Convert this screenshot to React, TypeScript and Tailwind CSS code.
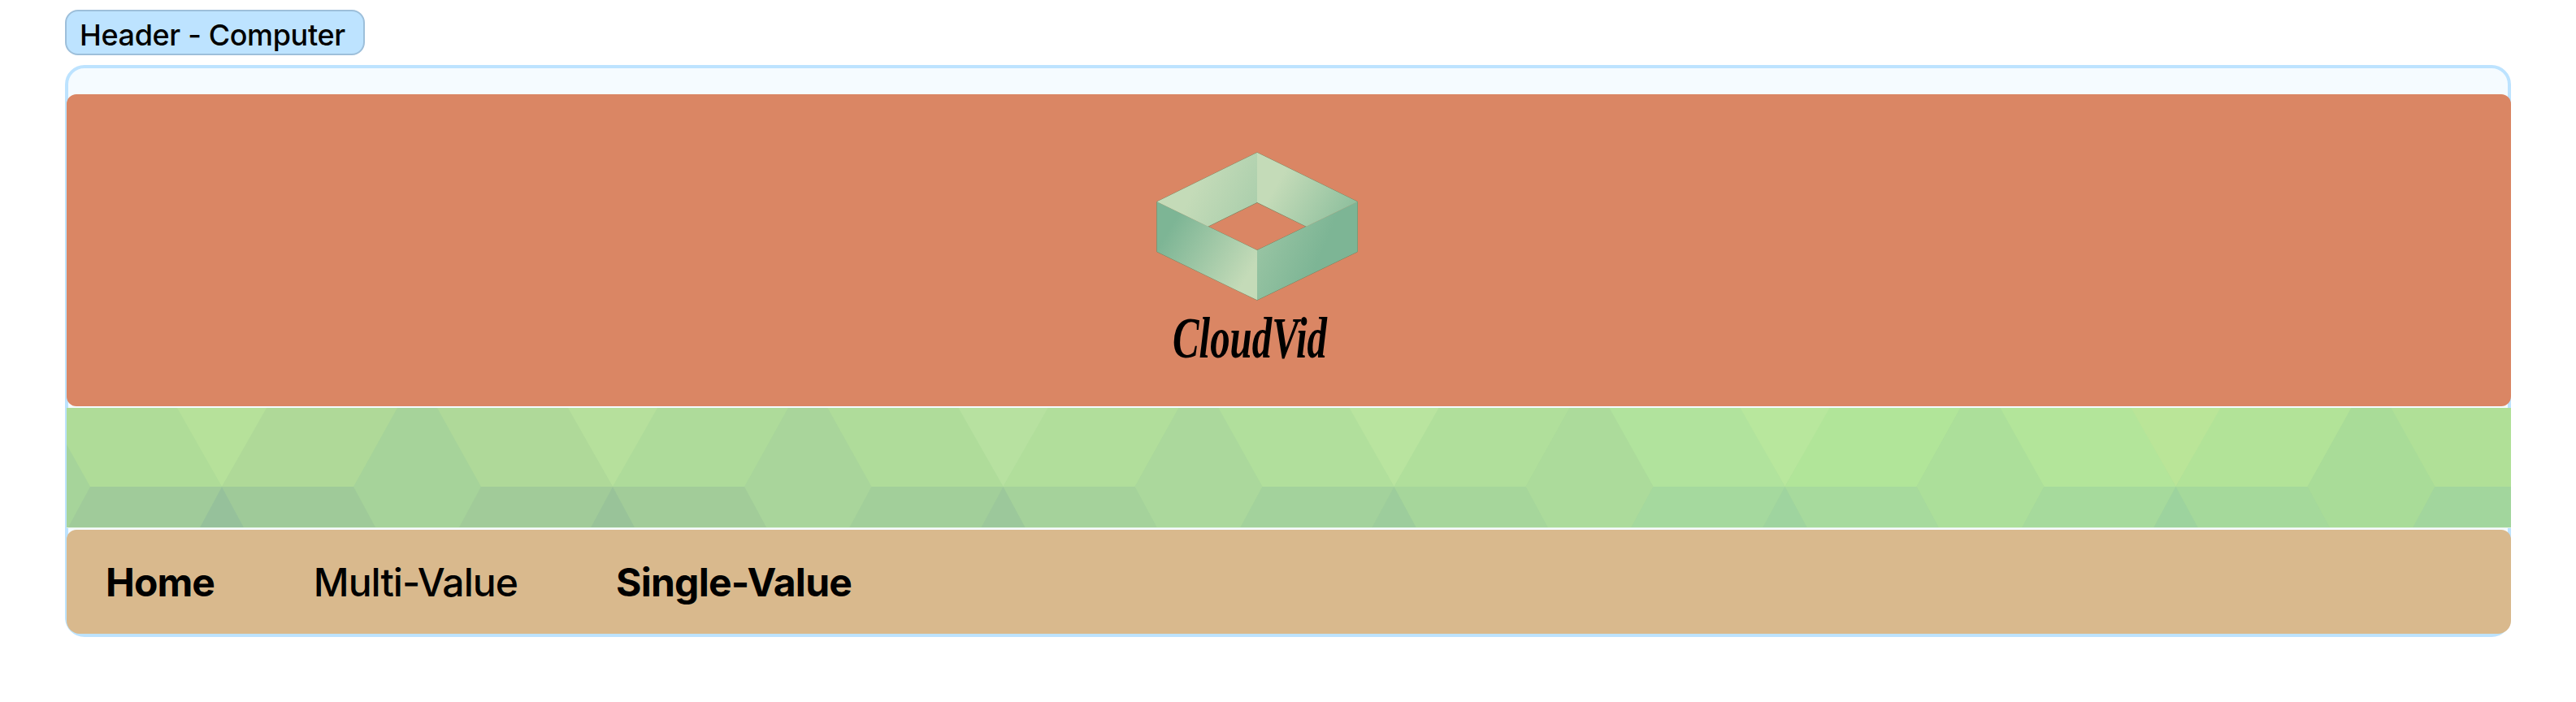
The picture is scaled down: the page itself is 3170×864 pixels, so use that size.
type Tile = {
  apex: number;
  peak: string;
  left: string;
  right: string;
  gem: string;
  lowLeft: string;
  lowRight: string;
  wedge: string;
};

const tiles: Tile[] = [
  { apex: 191, peak: '#b6e19a', left: '#afdc98', right: '#afd998', gem: '#a6d39a', lowLeft: '#a0cb9a', lowRight: '#9fca99', wedge: '#96c19b' },
  { apex: 672, peak: '#b6e09c', left: '#afd999', right: '#aedb9a', gem: '#a9d59b', lowLeft: '#a1cb99', lowRight: '#a2cc99', wedge: '#99c399' },
  { apex: 1152.5, peak: '#b7e1a0', left: '#afdc9a', right: '#b1de9b', gem: '#abd89c', lowLeft: '#a2cf9a', lowRight: '#a5d29b', wedge: '#9cc89b' },
  { apex: 1633.5, peak: '#b9e49f', left: '#b1df9c', right: '#b0df9b', gem: '#acdb9b', lowLeft: '#a3d29c', lowRight: '#a6d69b', wedge: '#9dcd9c' },
  { apex: 2114.5, peak: '#b8e79d', left: '#b1e39d', right: '#b1e599', gem: '#acdf9a', lowLeft: '#a5d99e', lowRight: '#a7da9d', wedge: '#9fd49f' },
  { apex: 2595.5, peak: '#bae598', left: '#b3e59a', right: '#b2e398', gem: '#a9dc98', lowLeft: '#a6da9c', lowRight: '#a5d99b', wedge: '#9dd39e' },
  { apex: 3076.5, peak: '#b9e298', left: '#b0e097', right: '#b0e097', gem: '#a9dc98', lowLeft: '#a2d69d', lowRight: '#a2d69d', wedge: '#9dd39e' },
];

function Pattern() {
  return (
    <svg className="block h-[148px] w-full" viewBox="0 0 3008 148" preserveAspectRatio="none" aria-hidden="true">
      <rect width="3008" height="147" fill="#a6d49a" />
      {tiles.map((t) => (
        <g key={t.apex} transform={`translate(${t.apex} 0)`}>
          <polygon points="162,97 216,0 266,0 319,97 292,147 189,147" fill={t.gem} />
          <polygon points="-216,0 -54,0 0,97 -162,97" fill={t.left} />
          <polygon points="54,0 216,0 162,97 0,97" fill={t.right} />
          <polygon points="-55,0 55,0 0,97" fill={t.peak} />
          <polygon points="-162,97 0,97 -27,147 -189,147" fill={t.lowLeft} />
          <polygon points="0,97 162,97 189,147 27,147" fill={t.lowRight} />
          <polygon points="0,97 27,147 -27,147" fill={t.wedge} />
        </g>
      ))}
      <rect y="147" width="3008" height="1" fill="#dff0dc" />
    </svg>
  );
}

function Logo() {
  return (
    <svg width="330" height="290" viewBox="1422 185 330 290" className="block" role="img" aria-label="CloudVid">
      <defs>
        <linearGradient id="backLeft" gradientUnits="userSpaceOnUse" x1="1470" y1="230" x2="1560" y2="275">
          <stop offset="0" stopColor="#c4dbb8" />
          <stop offset="1" stopColor="#a4cba9" />
        </linearGradient>
        <linearGradient id="backRight" gradientUnits="userSpaceOnUse" x1="1574" y1="222" x2="1656" y2="270">
          <stop offset="0" stopColor="#c4dbb8" />
          <stop offset="1" stopColor="#8fc09e" />
        </linearGradient>
        <linearGradient id="frontLeft" gradientUnits="userSpaceOnUse" x1="1438" y1="284" x2="1534" y2="342">
          <stop offset="0" stopColor="#7db595" />
          <stop offset="1" stopColor="#c4dbb8" />
        </linearGradient>
        <linearGradient id="frontRight" gradientUnits="userSpaceOnUse" x1="1520" y1="280" x2="1622" y2="322">
          <stop offset="0" stopColor="#a4cba9" />
          <stop offset="1" stopColor="#7db595" />
        </linearGradient>
      </defs>
      <g stroke="#74835f" strokeWidth="1" fill="none">
        <path d="M1547 187.8 1670.5 248.3V309.8L1547 369.3 1423.7 309.8V248.3Z" />
        <path d="M1547 249.2 1607.5 278.8 1547 308 1486.5 278.8Z" />
      </g>
      <polygon points="1423.7,248.3 1547,187.8 1547,249 1486.5,278.8" fill="url(#backLeft)" />
      <polygon points="1547,187.8 1670.5,248.3 1607.5,278.8 1547,249" fill="url(#backRight)" />
      <polygon points="1423.7,248.3 1547,308 1547,369.3 1423.7,309.8" fill="url(#frontLeft)" />
      <polygon points="1547,308 1670.5,248.3 1670.5,309.8 1547,369.3" fill="url(#frontRight)" />
      <text
        x="1443"
        y="440"
        textLength="190"
        lengthAdjust="spacingAndGlyphs"
        className="font-['Liberation_Serif',serif] text-[71px] font-bold italic"
      >
        CloudVid
      </text>
    </svg>
  );
}

export default function App() {
  return (
    <div className="h-[864px] w-[3170px] bg-white pt-3 pl-20 font-['Inter',sans-serif] text-black">
      <div className="flex h-14 w-[369px] items-center rounded-2xl border-2 border-[#9dbfda] bg-[#bde3ff] pt-1.5 pl-4">
        <span className="text-[36px] leading-none font-medium tracking-[-0.01em] whitespace-nowrap">Header - Computer</span>
      </div>
      <div className="mt-3 h-[704px] w-[3010px] rounded-3xl border-4 border-[#bde3ff] bg-[#f5fbff] pt-8">
        <header className="-ml-0.5 flex w-[3008px] flex-col gap-0.5">
          <div className="h-96 rounded-xl bg-[#da8664] pt-[69px] pl-[1340px]">
            <Logo />
          </div>
          <Pattern />
          <nav className="flex h-32 items-center gap-[121px] rounded-t-xl rounded-b-2xl bg-[#d9b98d] pt-0.5 pl-12 text-[48px] leading-none tracking-[-0.015em]">
            <a className="mr-px font-bold tracking-[-0.02em]">Home</a>
            <a className="font-medium tracking-[-0.02em]">Multi-Value</a>
            <a className="font-bold">Single-Value</a>
          </nav>
        </header>
      </div>
    </div>
  );
}
